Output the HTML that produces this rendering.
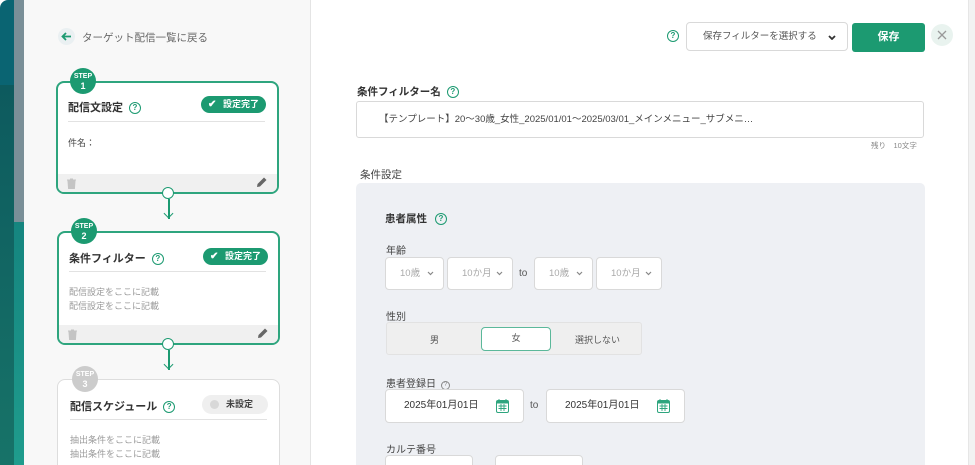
<!DOCTYPE html>
<html style="width:975px;height:465px;overflow:hidden"><head><meta charset="utf-8"><style>
*{box-sizing:border-box;margin:0;padding:0}
body{width:975px;height:465px;overflow:hidden;background:#fff;font-family:"Liberation Sans","Noto Sans CJK JP",sans-serif;color:#333;position:relative}
.a{position:absolute}
.card{position:absolute;background:#fff;border:2px solid #2ea57e;border-radius:8px;overflow:hidden}
.step{position:absolute;width:26px;height:26px;border-radius:50%;background:#1c9a71;color:#fff;font-size:7px;font-weight:bold;text-align:center;line-height:8px;padding-top:5px}
.step b{font-size:9px;display:block;line-height:10px}
.t{font-size:11px;font-weight:bold;color:#333;white-space:nowrap}
.q{display:inline-block;width:12px;height:12px;border:1.5px solid #1c9a71;border-radius:50%;color:#1c9a71;font-size:8px;font-weight:bold;text-align:center;line-height:9px;vertical-align:middle;margin-left:6px}
.done{position:absolute;background:#1c9a71;color:#fff;border-radius:9px;font-size:9px;font-weight:bold;height:17px;line-height:17px;padding:0 7px 0 22px}
.done:before{content:"✔";position:absolute;left:7px;font-size:10px}
.hr{position:absolute;height:1px;background:#e2e2e2}
.foot{position:absolute;left:0;right:0;bottom:0;height:18px;background:#f0f0f0}
.g{font-size:9px;color:#9a9a9a;line-height:14px}
.sel{position:absolute;background:#fff;border:1px solid #d9d9d9;border-radius:4px;font-size:9.5px;color:#aaa;height:33px;line-height:31px;padding-left:14px}
.sel svg{position:absolute;right:9px;top:13px}
.lbl{position:absolute;font-size:10px;color:#444}
.conn{position:absolute;width:1.5px;background:#1c9a71}
.dot{position:absolute;width:12px;height:12px;border:1.5px solid #1c9a71;border-radius:50%;background:#fff}
.arr{position:absolute;width:7px;height:7px;border-right:1.5px solid #1c9a71;border-bottom:1.5px solid #1c9a71;transform:rotate(45deg)}
.cal{position:absolute;left:110px;top:9px}
</style></head><body>
<div class="a" style="left:0;top:0;width:14px;height:85px;background:#0a6472;border-top-left-radius:8px"></div>
<div class="a" style="left:0;top:85px;width:14px;height:380px;background:linear-gradient(#0d5a5e,#177368)"></div>
<div class="a" style="left:14px;top:0;width:10px;height:222px;background:#7a8f98"></div>
<div class="a" style="left:14px;top:222px;width:10px;height:243px;background:linear-gradient(#15857f,#1f9c8d)"></div>
<div class="a" style="left:24px;top:0;width:287px;height:465px;background:#f8f8f8;border-right:1px solid #e4e4e4"></div>
<div class="a" style="left:968px;top:0;width:7px;height:465px;background:#f2f2f2;border-left:1px solid #e6e6e6"></div>

<div class="a" style="left:58px;top:28px;width:17px;height:17px;border-radius:50%;background:#eaf0f2"><svg width="17" height="17" viewBox="0 0 17 17"><path d="M13 8.5H4.5M8 5L4.5 8.5 8 12" stroke="#1c9a71" stroke-width="1.8" fill="none"/></svg></div>
<div class="a" style="left:82px;top:30px;font-size:10.5px;color:#666">ターゲット配信一覧に戻る</div>

<div class="card" style="left:56px;top:81px;width:223px;height:113px">
<div class="a t" style="left:10px;top:16px">配信文設定<span class="q">?</span></div>
<div class="done" style="left:143px;top:13px">設定完了</div>
<div class="hr" style="left:10px;right:12px;top:38px"></div>
<div class="a" style="left:10px;top:53px;font-size:9px;color:#444">件名：</div>
<div class="foot"><svg class="a" style="left:9px;top:4px" width="9" height="11" viewBox="0 0 9 11"><path d="M0 2h9M3 1h3M1 3h7l-.6 8H1.6z" fill="#c4c4c4" stroke="#c4c4c4"/></svg><svg class="a" style="right:10px;top:3px" width="11" height="11" viewBox="0 0 11 11"><path d="M1 10l.5-3L8 .5l2.5 2.5L4 9.5z" fill="#666"/></svg></div>
</div>
<div class="step" style="left:70px;top:68px">STEP<b>1</b></div>
<div class="dot" style="left:162px;top:187px"></div>
<div class="conn" style="left:168px;top:199px;height:20px"></div>
<div class="arr" style="left:165px;top:210px"></div>

<div class="card" style="left:57px;top:231px;width:223px;height:114px">
<div class="a t" style="left:10px;top:17px">条件フィルター<span class="q">?</span></div>
<div class="done" style="left:144px;top:15px">設定完了</div>
<div class="hr" style="left:10px;right:12px;top:38px"></div>
<div class="a g" style="left:10px;top:52px">配信設定をここに記載<br>配信設定をここに記載</div>
<div class="foot"><svg class="a" style="left:9px;top:4px" width="9" height="11" viewBox="0 0 9 11"><path d="M0 2h9M3 1h3M1 3h7l-.6 8H1.6z" fill="#c4c4c4" stroke="#c4c4c4"/></svg><svg class="a" style="right:10px;top:3px" width="11" height="11" viewBox="0 0 11 11"><path d="M1 10l.5-3L8 .5l2.5 2.5L4 9.5z" fill="#666"/></svg></div>
</div>
<div class="step" style="left:71px;top:218px">STEP<b>2</b></div>
<div class="dot" style="left:162px;top:338px"></div>
<div class="conn" style="left:168px;top:350px;height:20px"></div>
<div class="arr" style="left:165px;top:361px"></div>

<div class="card" style="left:57px;top:379px;width:223px;height:100px;border:1px solid #ddd">
<div class="a t" style="left:12px;top:18px">配信スケジュール<span class="q">?</span></div>
<div class="a" style="left:144px;top:15px;width:66px;height:19px;border-radius:10px;background:#efefef;font-size:9px;font-weight:bold;color:#444;line-height:19px;padding-left:24px">未設定<span class="a" style="left:8px;top:5px;width:9px;height:9px;border-radius:50%;background:#d8d8d8"></span></div>
<div class="hr" style="left:12px;right:12px;top:39px"></div>
<div class="a g" style="left:12px;top:53px">抽出条件をここに記載<br>抽出条件をここに記載</div>
</div>
<div class="step" style="left:72px;top:366px;background:#ccc">STEP<b>3</b></div>

<div class="a q" style="left:667px;top:30px;margin:0">?</div>
<div class="a" style="left:686px;top:22px;width:162px;height:29px;border:1px solid #d9d9d9;border-radius:4px;font-size:9.5px;color:#555;line-height:27px;padding-left:16px">保存フィルターを選択する<svg class="a" style="right:11px;top:12px" width="8" height="5" viewBox="0 0 8 5"><path d="M1 1l3 3 3-3" stroke="#333" stroke-width="1.8" fill="none"/></svg></div>
<div class="a" style="left:852px;top:23px;width:73px;height:29px;background:#1c9a71;border-radius:3px;color:#fff;font-size:11px;font-weight:bold;text-align:center;line-height:29px">保存</div>
<div class="a" style="left:931px;top:24px;width:22px;height:22px;border-radius:50%;background:#e9f3ef"><svg width="22" height="22" viewBox="0 0 22 22"><path d="M7 7l8 8M15 7l-8 8" stroke="#999" stroke-width="1.3"/></svg></div>

<div class="a t" style="left:357px;top:84px;font-weight:bold;font-size:10.5px">条件フィルター名<span class="q">?</span></div>
<div class="a" style="left:356px;top:101px;width:568px;height:37px;border:1px solid #d9d9d9;border-radius:3px;font-size:9.5px;color:#444;line-height:35px;padding-left:22px;white-space:nowrap">【テンプレート】20〜30歳_女性_2025/01/01〜2025/03/01_メインメニュー_サブメニ…</div>
<div class="a" style="left:871px;top:140px;font-size:7.5px;color:#888">残り　10文字</div>

<div class="a" style="left:360px;top:167px;font-size:10.5px;color:#444">条件設定</div>
<div class="a" style="left:356px;top:183px;width:569px;height:290px;background:#eef0f4;border-radius:5px"></div>
<div class="a t" style="left:385px;top:211px;font-size:10.5px">患者属性<span class="q" style="margin-left:8px">?</span></div>

<div class="lbl" style="left:386px;top:242px">年齢</div>
<div class="sel" style="left:385px;top:257px;width:59px">10歳<svg width="7" height="5" viewBox="0 0 7 5"><path d="M1 1l2.5 2.5L6 1" stroke="#888" stroke-width="1.2" fill="none"/></svg></div>
<div class="sel" style="left:447px;top:257px;width:66px">10か月<svg width="7" height="5" viewBox="0 0 7 5"><path d="M1 1l2.5 2.5L6 1" stroke="#888" stroke-width="1.2" fill="none"/></svg></div>
<div class="lbl" style="left:519px;top:268px;color:#555">to</div>
<div class="sel" style="left:534px;top:257px;width:59px">10歳<svg width="7" height="5" viewBox="0 0 7 5"><path d="M1 1l2.5 2.5L6 1" stroke="#888" stroke-width="1.2" fill="none"/></svg></div>
<div class="sel" style="left:596px;top:257px;width:66px">10か月<svg width="7" height="5" viewBox="0 0 7 5"><path d="M1 1l2.5 2.5L6 1" stroke="#888" stroke-width="1.2" fill="none"/></svg></div>

<div class="lbl" style="left:386px;top:308px">性別</div>
<div class="a" style="left:386px;top:322px;width:256px;height:33px;background:#efefef;border:1px solid #e2e2e2;border-radius:3px"></div>
<div class="a" style="left:430px;top:333px;font-size:9px;color:#555">男</div>
<div class="a" style="left:481px;top:327px;width:70px;height:24px;background:#fff;border:1.5px solid #5bb89a;border-radius:4px;font-size:9px;color:#555;text-align:center;line-height:21px">女</div>
<div class="a" style="left:575px;top:333px;font-size:9px;color:#555">選択しない</div>

<div class="lbl" style="left:386px;top:375px">患者登録日<span style="display:inline-block;width:9px;height:9px;border:1px solid #888;border-radius:50%;font-size:6px;text-align:center;line-height:7px;color:#888;margin-left:5px;vertical-align:1px">?</span></div>
<div class="a" style="left:385px;top:389px;width:139px;height:34px;background:#fff;border:1px solid #d9d9d9;border-radius:4px;font-size:10px;color:#333;line-height:32px;padding-left:18px">2025年01月01日<svg class="cal" width="13" height="14" viewBox="0 0 13 14"><rect x="0.5" y="1.5" width="12" height="12" rx="1.5" fill="#fff" stroke="#2ea57e"/><rect x="0.5" y="1.5" width="12" height="3" fill="#2ea57e"/><path d="M3 0v3M10 0v3M2.5 7h8M2.5 9.5h8M5 5v7M8 5v7" stroke="#2ea57e" stroke-width="0.9"/></svg></div>
<div class="lbl" style="left:530px;top:400px;color:#555">to</div>
<div class="a" style="left:546px;top:389px;width:139px;height:34px;background:#fff;border:1px solid #d9d9d9;border-radius:4px;font-size:10px;color:#333;line-height:32px;padding-left:18px">2025年01月01日<svg class="cal" width="13" height="14" viewBox="0 0 13 14"><rect x="0.5" y="1.5" width="12" height="12" rx="1.5" fill="#fff" stroke="#2ea57e"/><rect x="0.5" y="1.5" width="12" height="3" fill="#2ea57e"/><path d="M3 0v3M10 0v3M2.5 7h8M2.5 9.5h8M5 5v7M8 5v7" stroke="#2ea57e" stroke-width="0.9"/></svg></div>

<div class="lbl" style="left:386px;top:441px">カルテ番号</div>
<div class="a" style="left:385px;top:455px;width:88px;height:20px;background:#fff;border:1px solid #d9d9d9;border-radius:4px"></div>
<div class="a" style="left:495px;top:455px;width:88px;height:20px;background:#fff;border:1px solid #d9d9d9;border-radius:4px"></div>
</body></html>
